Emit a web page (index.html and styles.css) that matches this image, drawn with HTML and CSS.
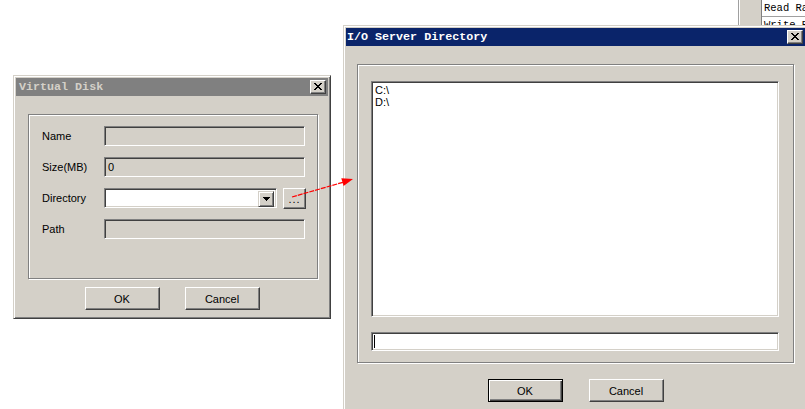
FILE: index.html
```html
<!DOCTYPE html>
<html>
<head>
<meta charset="utf-8">
<link rel="stylesheet" href="styles.css">
</head>
<body>
  <div class="bgwin">
    <div class="bg-edge"></div>
    <div class="bg-side"></div>
    <div class="bg-cells">
      <div class="bg-row">Read Rate</div>
      <div class="bg-row">Write Rate</div>
    </div>
  </div>

  <div class="win vd">
    <div class="titlebar inactive">
      <span class="title">Virtual Disk</span>
      <div class="close"><svg width="8" height="7" viewBox="0 0 8 7"><path d="M0 0h2v1h-2zM6 0h2v1h-2zM1 1h2v1h-2zM5 1h2v1h-2zM2 2h4v1h-4zM3 3h2v1h-2zM2 4h4v1h-4zM1 5h2v1h-2zM5 5h2v1h-2zM0 6h2v1h-2zM6 6h2v1h-2z" fill="#000"/></svg></div>
    </div>
    <div class="group vd-group">
      <div class="row"><span class="label">Name</span><div class="field sunken disabled"></div></div>
      <div class="row"><span class="label">Size(MB)</span><div class="field sunken disabled">0</div></div>
      <div class="row">
        <span class="label">Directory</span>
        <div class="combo sunken">
          <div class="combo-btn"><svg width="7" height="4" viewBox="0 0 7 4"><path d="M0 0h7v1h-7zM1 1h5v1h-5zM2 2h3v1h-3zM3 3h1v1h-1z" fill="#000"/></svg></div>
        </div>
        <div class="btn dots">...</div>
      </div>
      <div class="row"><span class="label">Path</span><div class="field sunken disabled"></div></div>
    </div>
    <div class="buttons vd-buttons">
      <div class="btn push">OK</div>
      <div class="btn push">Cancel</div>
    </div>
  </div>

  <div class="win io">
    <div class="titlebar active">
      <span class="title">I/O Server Directory</span>
      <div class="close"><svg width="8" height="7" viewBox="0 0 8 7"><path d="M0 0h2v1h-2zM6 0h2v1h-2zM1 1h2v1h-2zM5 1h2v1h-2zM2 2h4v1h-4zM3 3h2v1h-2zM2 4h4v1h-4zM1 5h2v1h-2zM5 5h2v1h-2zM0 6h2v1h-2zM6 6h2v1h-2z" fill="#000"/></svg></div>
    </div>
    <div class="group io-group">
      <div class="list sunken">
        <div class="item">C:\</div>
        <div class="item">D:\</div>
      </div>
      <div class="textfield sunken"><span class="caret"></span></div>
    </div>
    <div class="buttons io-buttons">
      <div class="btn push default">OK</div>
      <div class="btn push">Cancel</div>
    </div>
  </div>

  <svg class="arrow" width="70" height="35" viewBox="0 0 70 35">
    <line x1="2" y1="27" x2="54" y2="12" stroke="#ff0000" stroke-width="1.2" stroke-dasharray="5 1"/>
    <polygon points="63,9 53.6,15.9 51.3,8.3" fill="#ff0000"/>
  </svg>
</body>
</html>
```

FILE: styles.css
```css
* { box-sizing: border-box; }

body {
  margin: 0;
  width: 805px;
  height: 409px;
  overflow: hidden;
  position: relative;
  background: #fff;
  font-family: "Liberation Sans", Arial, sans-serif;
  font-size: 11px;
  color: #000;
}

/* background window peeking at top right */
.bgwin {
  position: absolute;
  left: 738px;
  top: 0;
  width: 67px;
  height: 26px;
  display: flex;
  overflow: hidden;
}
.bg-edge {
  width: 2px;
  border-left: 1px solid #a0a0a0;
  background: #fff;
}
.bg-side {
  width: 22px;
  background: #d4d0c8;
  border-right: 1px solid #808080;
}
.bg-cells {
  flex: 1;
  background: #fff;
  font-family: "Liberation Mono", "Courier New", monospace;
  font-size: 10.5px;
  white-space: nowrap;
  overflow: hidden;
}
.bg-row {
  height: 17px;
  line-height: 16px;
  padding-left: 2px;
  border-bottom: 1px solid #a0a0a0;
}

/* windows */
.win {
  position: absolute;
  background: #d4d0c8;
  border: 1px solid;
  border-color: #d4d0c8 #404040 #404040 #d4d0c8;
  box-shadow: inset 1px 1px #fff, inset -1px -1px #808080;
  padding: 2px;
  display: flex;
  flex-direction: column;
}
.vd { left: 13px; top: 75px; width: 318px; height: 244px; }
.io { left: 343px; top: 25px; width: 465px; height: 400px; }

.titlebar {
  height: 18px;
  flex: none;
  display: flex;
  align-items: center;
  justify-content: space-between;
  padding: 0 2px 0 3px;
}
.titlebar.inactive { background: #808080; color: #d4d0c8; }
.titlebar.active { background: #0a246a; color: #fff; padding-left: 1px; }
.title {
  font-family: "Liberation Mono", "Courier New", monospace;
  font-weight: bold;
  font-size: 11.7px;
  letter-spacing: 0;
}
.close {
  width: 16px;
  height: 14px;
  background: #d4d0c8;
  border: 1px solid;
  border-color: #fff #404040 #404040 #fff;
  box-shadow: inset -1px -1px #808080;
  display: flex;
  align-items: center;
  justify-content: center;
  padding: 0 1px 1px 0;
}
.close svg { display: block; }

/* 3D helpers */
.group {
  border: 1px solid #808080;
  box-shadow: inset 1px 1px #fff, 1px 1px #fff;
}
.sunken {
  border: 1px solid;
  border-color: #808080 #fff #fff #808080;
  box-shadow: inset 1px 1px #404040, inset -1px -1px #d4d0c8;
}
.btn {
  background: #d4d0c8;
  border: 1px solid;
  border-color: #fff #404040 #404040 #fff;
  box-shadow: inset -1px -1px #808080;
  display: flex;
  align-items: center;
  justify-content: center;
}

/* Virtual Disk */
.vd-group {
  margin: 18px 10px 0 12px;
  height: 165px;
  padding: 11px 0 0 13px;
  display: flex;
  flex-direction: column;
  gap: 11px;
}
.row {
  display: flex;
  align-items: center;
  height: 20px;
}
.label { width: 62px; }
.field {
  width: 201px;
  height: 20px;
  padding: 3px 0 0 3px;
  background: #fff;
}
.field.disabled { background: #d4d0c8; }
.combo {
  width: 173px;
  height: 20px;
  background: #fff;
  padding: 2px;
  display: flex;
  justify-content: flex-end;
}
.combo-btn {
  width: 16px;
  height: 16px;
  background: #d4d0c8;
  border: 1px solid;
  border-color: #d4d0c8 #404040 #404040 #d4d0c8;
  box-shadow: inset 1px 1px #fff, inset -1px -1px #808080;
  display: flex;
  align-items: center;
  justify-content: center;
}
.combo-btn svg { display: block; }
.dots {
  width: 23px;
  height: 21px;
  margin-left: 6px;
  align-items: flex-end;
  padding-bottom: 3px;
  line-height: 11px;
  letter-spacing: 1px;
}

.buttons {
  display: flex;
  justify-content: center;
}
.vd-buttons { margin-top: 8px; gap: 25px; }
.push { width: 75px; height: 23px; }
.btn.default {
  border-color: #000;
  box-shadow: inset 1px 1px #fff, inset -1px -1px #404040, inset -2px -2px #808080;
}

/* I/O Server Directory */
.io-group {
  margin: 18px 11px 0 11px;
  height: 299px;
  padding: 16px 14px 0 13px;
  display: flex;
  flex-direction: column;
}
.list {
  height: 236px;
  background: #fff;
  padding: 2px 0 0 3px;
}
.item { line-height: 12px; height: 12px; }
.textfield {
  margin-top: 15px;
  height: 19px;
  background: #fff;
  padding: 2px 0 0 2px;
}
.caret {
  display: block;
  width: 1px;
  height: 13px;
  background: #000;
}
.io-buttons { margin-top: 16px; gap: 26px; }

.arrow {
  position: absolute;
  left: 290px;
  top: 170px;
}
```
